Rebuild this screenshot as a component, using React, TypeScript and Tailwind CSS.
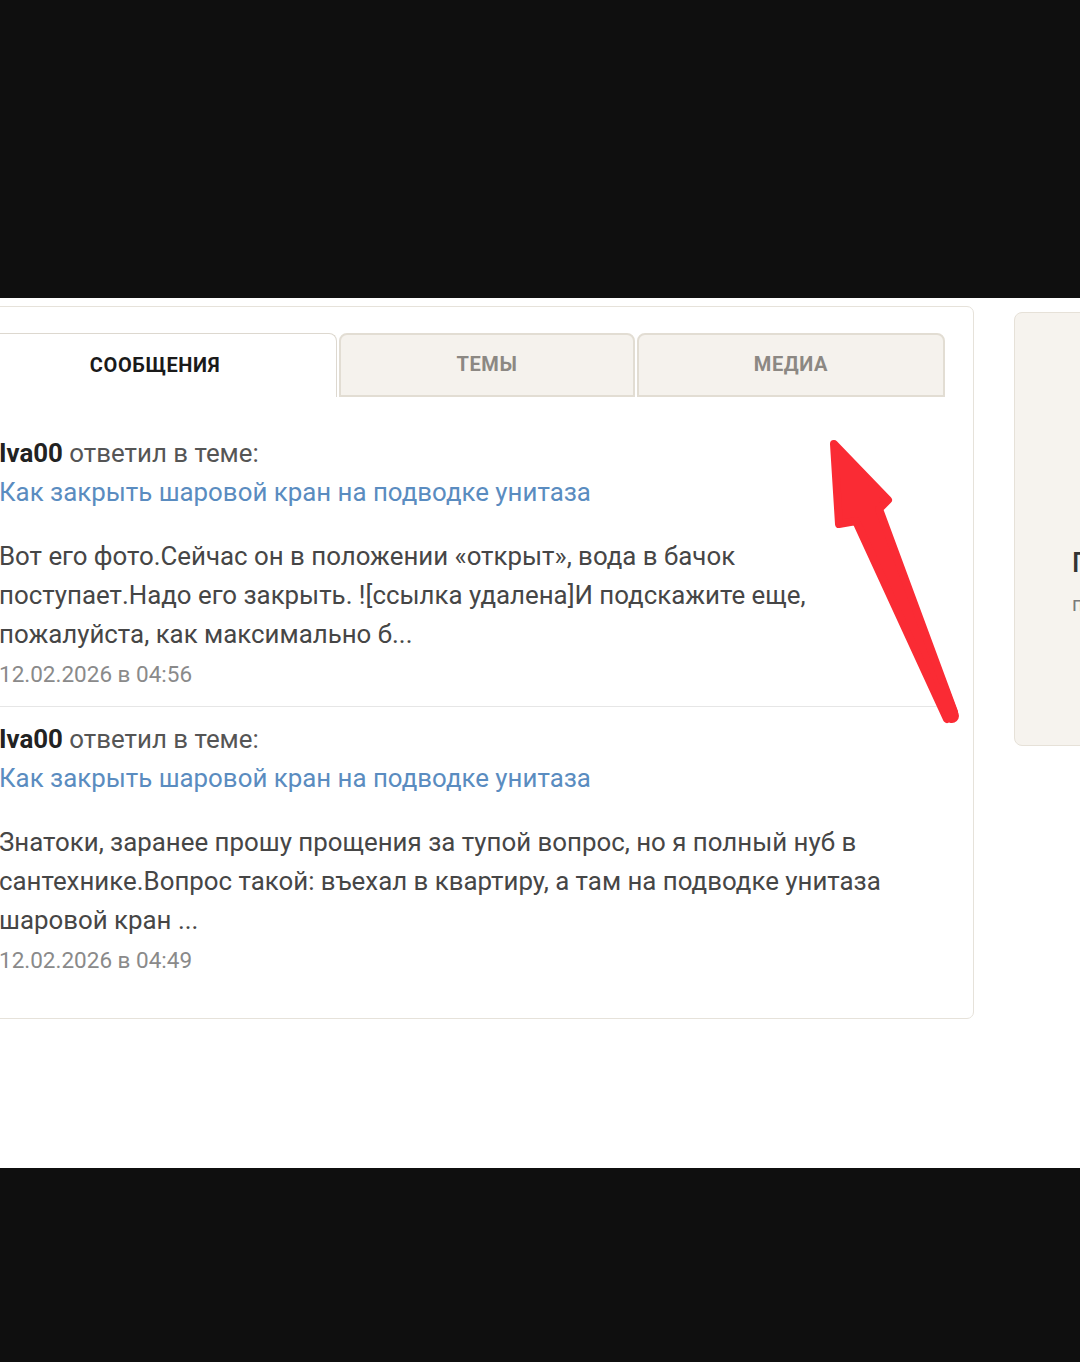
import React from "react";

const font = { fontFamily: "Roboto, 'Noto Sans', Arial, sans-serif" };

function Post({
  body,
  date,
  last,
}: {
  body: string[];
  date: string;
  last?: boolean;
}) {
  return (
    <div className={`pl-[26px] pt-[13px] pb-[16px] ${last ? "" : "border-b border-[#e6e6e6]"}`}>
      <div className="text-[25.85px] leading-[39px] text-[#555]">
        <span className="font-bold text-[#222]">Iva00</span> ответил в теме:
      </div>
      <div className="text-[25.85px] leading-[39px] text-[#5a8cc0]">
        Как закрыть шаровой кран на подводке унитаза
      </div>
      <div className="mt-[25px] text-[25.85px] leading-[39px] text-[#464646]">
        {body.map((l, i) => (
          <div key={i} className="whitespace-nowrap">
            {l}
          </div>
        ))}
      </div>
      <div className="text-[22.5px] leading-[32px] mt-[4px] text-[#8a8a8a]">{date}</div>
    </div>
  );
}

export default function App() {
  return (
    <div className="relative w-[1080px] h-[1362px] overflow-hidden bg-[#0f0f0f]" style={font}>
      <div className="h-[298px] bg-[#0f0f0f]" />
      <div className="h-[870px] bg-white flex items-start">
        <div className="ml-[-45px] mt-[8px] w-[1019px] h-[713px] shrink-0 border border-[#e6e2da] rounded-[7px] bg-white pl-[17px] pr-[28px] pt-[26px]">
          <div className="flex h-[64px] gap-[2px]">
            <div className="w-[364px] h-[64px] bg-white border border-b-0 border-[#ddd8cf] rounded-t-[8px] flex items-center justify-center pb-[2px] text-[20px] font-bold text-[#1a1a1a] tracking-[0.6px]">
              СООБЩЕНИЯ
            </div>
            <div className="w-[296px] h-[64px] bg-[#f5f2ed] border-2 border-[#e2ddd3] rounded-t-[8px] flex items-center justify-center pb-[2px] text-[20px] font-bold text-[#8c8883] tracking-[0.6px]">
              ТЕМЫ
            </div>
            <div className="w-[308px] h-[64px] bg-[#f5f2ed] border-2 border-[#e2ddd3] rounded-t-[8px] flex items-center justify-center pb-[2px] text-[20px] font-bold text-[#8c8883] tracking-[0.6px]">
              МЕДИА
            </div>
          </div>
          <div className="pt-[24px] pr-[5px]">
            <Post
              body={[
                "Вот его фото.Сейчас он в положении «открыт», вода в бачок",
                "поступает.Надо его закрыть. ![ссылка удалена]И подскажите еще,",
                "пожалуйста, как максимально б...",
              ]}
              date="12.02.2026 в 04:56"
            />
            <Post
              last
              body={[
                "Знатоки, заранее прошу прощения за тупой вопрос, но я полный нуб в",
                "сантехнике.Вопрос такой: въехал в квартиру, а там на подводке унитаза",
                "шаровой кран ...",
              ]}
              date="12.02.2026 в 04:49"
            />
          </div>
        </div>
        <div className="ml-[40px] mt-[14px] w-[300px] h-[434px] shrink-0 bg-[#f6f3ee] border border-[#e6e1d8] rounded-[8px] pl-[57px] pt-[232px]">
          <div className="text-[27px] leading-[36px] font-medium text-[#333] whitespace-nowrap">Похожие темы</div>
          <div className="text-[20px] leading-[30px] mt-[8px] text-[#7a7a7a] whitespace-nowrap">последние</div>
        </div>
      </div>
      <div className="h-[194px] bg-[#0f0f0f]" />
      <svg
        className="absolute left-0 top-0 pointer-events-none"
        width="1080"
        height="1362"
        viewBox="0 0 1080 1362"
      >
        <path
          d="M834 444 L888 500 L879 509 L954 712 L947 719 L856 521 L839 524 Z"
          fill="#fa2b34"
          stroke="#fa2b34"
          strokeWidth="8"
          strokeLinejoin="round"
        />
        <line x1="942" y1="690" x2="952" y2="716" stroke="#fa2b34" strokeWidth="14" strokeLinecap="round" />
      </svg>
    </div>
  );
}
